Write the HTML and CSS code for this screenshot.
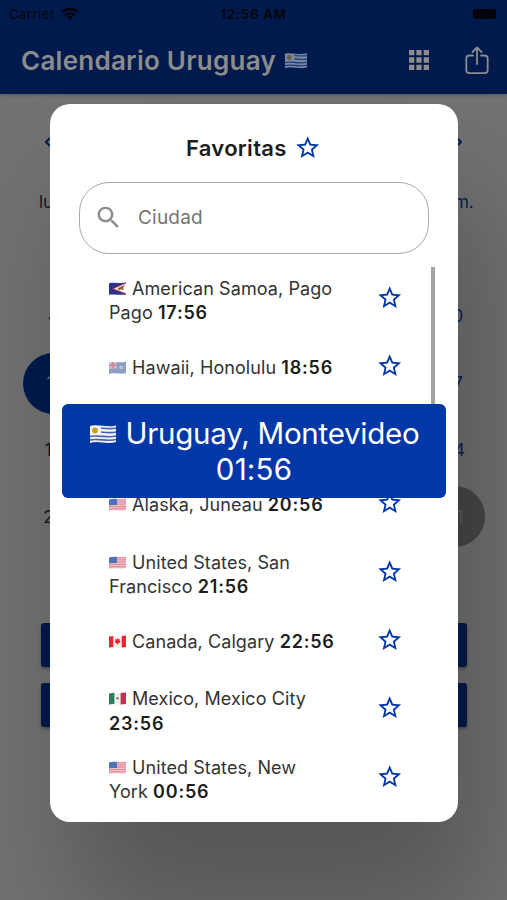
FILE: index.html
```html
<!DOCTYPE html>
<html lang="es">
<head>
<meta charset="utf-8">
<title>Calendario Uruguay</title>
<link rel="stylesheet" href="styles.css">
</head>
<body>
<svg class="defs" aria-hidden="true">
  <symbol id="star" viewBox="0 0 24 24"><path fill="currentColor" d="M22 9.24l-7.19-.62L12 2 9.19 8.63 2 9.24l5.46 4.73L5.82 21 12 17.27 18.18 21l-1.63-7.03L22 9.24zM12 15.4l-3.76 2.27 1-4.28-3.32-2.88 4.38-.38L12 6.1l1.71 4.04 4.38.38-3.32 2.88 1 4.28L12 15.4z"/></symbol>
  <symbol id="uy" viewBox="0 0 28 20">
    <path fill="#f4f4f4" d="M1 2C8-.2 18 4 27 1.5V18C18 21 9 16 1 19z"/>
    <path fill="none" stroke="#4665ad" stroke-width="1.6" d="M12 4c5 .5 10 1.3 15 0M12 8c5 .5 10 1.3 15 0M1 12.5c8-2 18 2 26-.5M1 16c8-2 18 2 26-.5"/>
    <circle cx="6" cy="6.5" r="2.9" fill="#c8a22c"/>
  </symbol>
  <symbol id="us" viewBox="0 0 17 13">
    <path fill="#f3c5cc" d="M0 1.5c6-1.6 11 .8 17-.8V12c-6 1.5-11-.8-17 .8z"/>
    <path fill="none" stroke="#df7e8b" stroke-width="1" d="M8 1.6c3 .2 6 .4 9-.3M8 3.8c3 .2 6 .4 9-.3M8 6c3 .2 6 .4 9-.3M0 8.9c6-1.5 11 .7 17-.7M0 11.2c6-1.5 11 .7 17-.7"/>
    <path fill="#4d73b5" d="M0 1.5C3 .7 6 .8 8 1v6c-3-.2-5-.1-8 .4z"/>
  </symbol>
  <symbol id="hi" viewBox="0 0 17 13">
    <path fill="#b9bfd6" d="M0 1.5c6-1.6 11 .8 17-.8V12c-6 1.5-11-.8-17 .8z"/>
    <path fill="#8c9dc6" d="M8 1.3c3 .3 6 .4 9-.4V12c-6 1.4-11-.8-17 .6V8l8-.5z"/>
    <path stroke="#dc7b84" stroke-width="1.4" d="M4 1v6.5M0 4.4l8-.3"/>
    <circle cx="12.2" cy="6.5" r="2" fill="#b6c4d4"/>
  </symbol>
  <symbol id="as" viewBox="0 0 17 13">
    <path fill="#2b3485" d="M0 1.2c6-1.5 11 .8 17-.6v11.8c-6 1.2-11-.8-17 .4z"/>
    <path fill="#c1395a" d="M17 .3L3 6.8l14 5.6z"/>
    <path fill="#fff" d="M17 1.6L5 6.8l12 4.4z"/>
    <path fill="#8a5c27" d="M8.5 6.2l5-2.2 2.5-1-2 3 1 2-3-.8-2 1z"/>
  </symbol>
  <symbol id="ca" viewBox="0 0 17 13">
    <path fill="#f5f2f2" d="M0 1.5c6-1.6 11 .8 17-.8V12c-6 1.5-11-.8-17 .8z"/>
    <path fill="#e3292e" d="M0 1.5L4.3.9v11L0 12.6zM12.7 1l4.3-.5V12l-4.3.4zM8.5 3l1 1.5 1.6-.3-.5 1.8 1.2 1-3 1.7V10h-.6V8.7L5.3 7l1.2-1L6 4.2l1.6.3z"/>
  </symbol>
  <symbol id="mx" viewBox="0 0 17 13">
    <path fill="#f0f1ef" d="M0 1.5c6-1.6 11 .8 17-.8V12c-6 1.5-11-.8-17 .8z"/>
    <path fill="#2b7d5b" d="M0 1.5L5.4.8v11L0 12.6z"/>
    <path fill="#c43150" d="M11.6 1l5.4-.5V12l-5.4.4z"/>
    <circle cx="8.6" cy="6.3" r="1.3" fill="#8a8062"/>
  </symbol>
</svg>

<div class="screen">
  <header class="topbar">
    <div class="status">
      <span class="carrier">Carrier
        <svg width="18" height="14" viewBox="0 0 18 14"><path fill="none" stroke="#020407" stroke-width="2.4" d="M1.2 5.2a11 11 0 0 1 15.6 0M4.2 8.4a6.8 6.8 0 0 1 9.6 0"/><path d="M9 13.2l-2.8-3a4 4 0 0 1 5.6 0z" fill="#020407"/></svg>
      </span>
      <span class="clock">12:56 AM</span>
      <span class="battery"></span>
    </div>
    <div class="appbar">
      <h1>Calendario Uruguay</h1>
      <svg class="title-flag"><use href="#uy"/></svg>
      <svg class="grid-icon" viewBox="0 0 20 20"><path fill="currentColor" d="M0 0h5.3v5.3H0zM7.35 0h5.3v5.3h-5.3zM14.7 0H20v5.3h-5.3zM0 7.35h5.3v5.3H0zM7.35 7.35h5.3v5.3h-5.3zM14.7 7.35H20v5.3h-5.3zM0 14.7h5.3V20H0zM7.35 14.7h5.3V20h-5.3zM14.7 14.7H20V20h-5.3z"/></svg>
      <svg class="share-icon" viewBox="0 0 24 29"><path fill="none" stroke="currentColor" stroke-width="1.8" stroke-linecap="round" stroke-linejoin="round" d="M8 9.5H4.5Q1.3 9.5 1.3 12.7V24Q1.3 27.2 4.5 27.2h15Q22.7 27.2 22.7 24V12.7Q22.7 9.5 19.5 9.5H16M12 18V1.5M7.5 6L12 1.5 16.5 6"/></svg>
    </div>
  </header>

  <main class="calendar">
    <div class="months"><svg viewBox="0 0 6 10"><path d="M5 1L1 5l4 4"/></svg><svg viewBox="0 0 6 10"><path d="M1 1l4 4-4 4"/></svg></div>
    <div class="week names"><span>lun.</span><span class="sun">dom.</span></div>
    <div class="week"><span>4</span><span class="sun">10</span></div>
    <div class="week"><span class="today">11</span><span class="sun">17</span></div>
    <div class="week"><span>18</span><span class="sun">24</span></div>
    <div class="week"><span>25</span><span class="sun holiday">31</span></div>
    <div class="actions"><div></div><div></div></div>
  </main>

  <section class="dialog">
    <h2>Favoritas <svg class="star"><use href="#star"/></svg></h2>
    <div class="search">
      <svg viewBox="0 0 24 24"><path fill="currentColor" d="M15.5 14h-.79l-.28-.27C15.41 12.59 16 11.11 16 9.5 16 5.91 13.09 3 9.5 3S3 5.91 3 9.5 5.91 16 9.5 16c1.61 0 3.09-.59 4.23-1.57l.27.28v.79l5 4.99L20.49 19l-4.99-5zm-6 0C7.01 14 5 11.99 5 9.5S7.01 5 9.5 5 14 7.01 14 9.5 11.99 14 9.5 14z"/></svg>
      <span>Ciudad</span>
    </div>
    <ul class="cities">
      <li><p><svg class="flag"><use href="#as"/></svg>American Samoa, Pago<br>Pago <b>17:56</b></p><svg class="star"><use href="#star"/></svg></li>
      <li class="single"><p><svg class="flag"><use href="#hi"/></svg>Hawaii, Honolulu <b>18:56</b></p><svg class="star"><use href="#star"/></svg></li>
      <li></li>
      <li class="single"><p><svg class="flag"><use href="#us"/></svg>Alaska, Juneau <b>20:56</b></p><svg class="star"><use href="#star"/></svg></li>
      <li><p><svg class="flag"><use href="#us"/></svg>United States, San<br>Francisco <b>21:56</b></p><svg class="star"><use href="#star"/></svg></li>
      <li class="single"><p><svg class="flag"><use href="#ca"/></svg>Canada, Calgary <b>22:56</b></p><svg class="star"><use href="#star"/></svg></li>
      <li><p><svg class="flag"><use href="#mx"/></svg>Mexico, Mexico City<br><b>23:56</b></p><svg class="star"><use href="#star"/></svg></li>
      <li><p><svg class="flag"><use href="#us"/></svg>United States, New<br>York <b>00:56</b></p><svg class="star"><use href="#star"/></svg></li>
    </ul>
    <div class="scrollbar"></div>
    <div class="current"><svg><use href="#uy"/></svg>Uruguay, Montevideo<br><span>01:56</span></div>
  </section>
</div>
</body>
</html>
```

FILE: styles.css
```css
* { box-sizing: border-box; margin: 0; padding: 0; }
body { font-family: Inter, "Liberation Sans", sans-serif; background: #727272; }
.defs { position: absolute; width: 0; height: 0; }
.screen { position: relative; width: 507px; height: 900px; overflow: hidden; }

.topbar { position: relative; height: 94px; background: #001a4d; box-shadow: 0 1px 3px rgba(0,0,0,.25); }
.status { display: grid; grid-template-columns: 1fr auto 1fr; align-items: center; height: 27px; padding: 0 11px 0 9px; color: #020407; font-size: 13px; }
.carrier { display: flex; align-items: center; gap: 6px; letter-spacing: .5px; }
.clock { font-weight: 600; letter-spacing: .9px; padding-left: 2px; }
.battery { justify-self: end; width: 23px; height: 10px; border-radius: 3px; background: #020407; }
.appbar { display: flex; align-items: center; height: 67px; padding-left: 21px; color: #8c8c8c; }
.appbar h1 { width: 263px; margin-top: -1px; font-size: 26px; font-weight: 600; letter-spacing: .25px; white-space: nowrap; }
.title-flag { width: 24px; height: 17px; opacity: .5; }
.grid-icon { width: 20px; height: 20px; margin: -2px 0 0 101px; }
.share-icon { width: 24px; height: 29px; margin-left: 36px; }

.calendar { font-size: 17px; color: #161616; }
.months { display: flex; justify-content: space-between; align-items: center; height: 96px; padding: 0 45px; }
.months svg { width: 6px; height: 10px; fill: none; stroke: #001a55; stroke-width: 2; }
.week { display: flex; justify-content: space-between; align-items: center; height: 66.8px; padding: 0 22px 0 23px; }
.week span { width: 61px; height: 61px; display: flex; align-items: center; justify-content: center; }
.names { height: 23px; margin-bottom: 70px; padding-right: 23px; }
.week .sun { color: #061f55; }
.week .today { background: #001a4d; color: #777; border-radius: 50%; }
.week .holiday { background: #484848; color: #606060; border-radius: 50%; }
.actions { display: grid; gap: 16.5px; margin: 72.5px 40px 0 41px; }
.actions div { height: 44px; border-radius: 3px; background: #001a4d; box-shadow: 0 2px 3px rgba(0,0,0,.3); }

.dialog { position: absolute; left: 50px; top: 103.5px; width: 408px; height: 718.5px; padding: 0 29px; background: #fff; border-radius: 20px; box-shadow: 24px 95px 120px 0 rgba(0,0,0,.25); }
.star { width: 27.4px; height: 27.4px; color: #0237a8; flex: none; }
.dialog h2 { display: flex; justify-content: center; align-items: center; gap: 7px; height: 89px; padding-right: 1px; color: #1d1d1d; font-size: 22px; font-weight: 600; letter-spacing: .3px; }
.search { display: flex; align-items: center; width: 350px; height: 72px; margin-top: -11px; border: 1.3px solid #a8a8a8; border-radius: 30px; padding-left: 14px; color: #757575; font-size: 19px; letter-spacing: .2px; }
.search svg { width: 29px; height: 29px; margin-right: 15px; color: #8c8c8c; }
.cities { list-style: none; margin-top: 10px; padding-left: 30px; }
.cities li { display: flex; align-items: center; justify-content: space-between; height: 68.4px; padding-right: 26px; }
.cities p { padding-top: 7.5px; color: #333; font-size: 18px; line-height: 24.5px; letter-spacing: .08px; white-space: nowrap; }
.cities .single p { padding-top: 4.5px; }
.cities b { color: #1d1d1d; font-weight: 600; letter-spacing: .8px; }
.flag { width: 17px; height: 13px; margin-right: 6px; vertical-align: 0; }
.scrollbar { position: absolute; left: 381px; top: 163px; width: 3.5px; height: 150px; background: #a3a3a3; }
.current { position: absolute; left: 12px; top: 300px; width: 384px; height: 94px; padding-top: 11px; border-radius: 6px; background: #0237a8; color: #fff; font-size: 29.5px; line-height: 36.5px; letter-spacing: -.25px; text-align: center; white-space: nowrap; }
.current span { letter-spacing: .2px; }
.current svg { width: 28px; height: 20px; margin-right: 9px; vertical-align: 0; }
```
